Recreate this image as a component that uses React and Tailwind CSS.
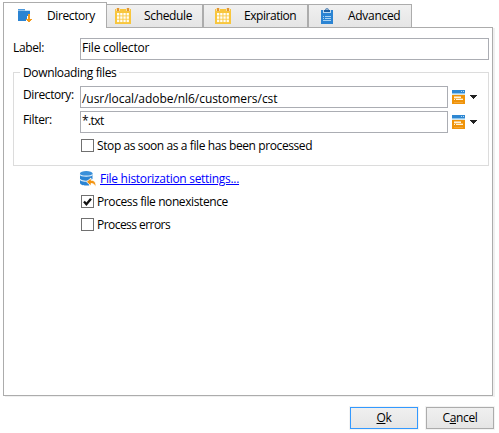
import React from 'react';

function FolderIcon() {
  return (
    <svg width="16" height="16" viewBox="0 0 16 16" shapeRendering="crispEdges">
      <path d="M1 1h7v1H1z" fill="#4c9ade" />
      <path d="M1 2h12v1H1z" fill="#c4def4" />
      <path d="M1 2h7v1H1z" fill="#8fc0ea" />
      <path d="M1 3h12v5h-3v3H9v2H1z" fill="#2b84d3" />
      <path d="M11 6h2v5h2v1h-1v1h-1v1h-2v-1h-1v-1H9v-1h2z" fill="#f39a1d" />
    </svg>
  );
}

function CalendarIcon() {
  const cells = [];
  for (const y of [5, 8.3, 11.6]) {
    for (const x of [2, 5.2, 8.4, 11.6]) {
      cells.push(<rect key={x + '-' + y} x={x} y={y} width="2.300" height="2.500" fill="#fffdf6" />);
    }
  }
  return (
    <svg width="16" height="16" viewBox="0 0 16 16">
      <path d="M0 1h16v15H0z" fill="#f8c63d" />
      <path d="M1 0h4v3H1zM11 0h4v3h-4z" fill="#f6dcae" />
      <path d="M2 0h2v3H2zM12 0h2v3h-2z" fill="#e3952f" />
      {cells}
    </svg>
  );
}

function ClipboardIcon() {
  return (
    <svg width="12" height="16" viewBox="0 0 12 16">
      <path d="M0 2h12v14H0z" fill="#2b84d3" />
      <path d="M2 2h8v3H2z" fill="#b9d9f2" />
      <path d="M3 4V2h1.200a1.800 1.800 0 0 1 3.600 0H9v2z" fill="#1c5fa3" />
      <path d="M5.500 1h1v1h-1z" fill="#fff" />
      <path d="M2 8h1v1H2zM4 8h6v1H4zM2 10h1v1H2zM4 10h6v1H4zM2 12h8v1H2z" fill="#a9d3f3" />
    </svg>
  );
}

function BrowseIcon() {
  return (
    <svg width="13" height="14" viewBox="0 0 13 14" shapeRendering="crispEdges">
      <path d="M0 0h13v3H0z" fill="#2e87d2" />
      <path d="M9 1h1v1H9zM11 1h1v1h-1z" fill="#b5daf5" />
      <path d="M0 3h13v1H0z" fill="#8fc6ee" />
      <path d="M0 4h13v1H0z" fill="#d9e6e6" />
      <path d="M0 5h13v9H0z" fill="#ef9309" />
      <path d="M2 6h7v1H2z" fill="#f8c97f" />
      <path d="M2 7h7v1H2zM4 9h7v1H4z" fill="#fff3dc" />
      <path d="M2 8h9v1H2z" fill="#f6b858" />
      <path d="M2 9h1v1H2z" fill="#fff3dc" />
      <path d="M2 12h9v1H2z" fill="#f3a638" />
    </svg>
  );
}

function BrowseButton() {
  return (
    <div className="ml-1 mt-1 flex h-[14px]">
      <BrowseIcon />
      <svg className="ml-[5px] mt-[5px]" width="7" height="4" viewBox="0 0 7 4" shapeRendering="crispEdges">
        <path d="M0 0h7v1H6v1H5v1H4v1H3V3H2V2H1V1H0z" fill="#222" />
      </svg>
    </div>
  );
}

function DatabaseIcon() {
  return (
    <svg className="overflow-visible" width="16" height="16" viewBox="0 0 16 16">
      <path d="M0 2.200v9.800c0 1.600 2.800 2.500 6.200 2.500h3V10l3.300-2V2.200z" fill="#2b84d3" />
      <ellipse cx="6.250" cy="2.200" rx="6.250" ry="2.200" fill="#3a90da" />
      <path d="M0 3.500c1 2.200 11.500 2.200 12.500 0M0 8.300c1 2.200 7 2.300 9.500 1.300" fill="none" stroke="#e3f1fb" strokeWidth="1.100" />
      <path d="M6.500 10.800L11 7v2.200c3.600 0 5.300 2.600 4.900 7-.9-2.500-2.400-3.700-4.900-3.700V15z" fill="#f39411" stroke="#fff" strokeWidth=".8" />
    </svg>
  );
}

function Tab({ icon, className, labelClass, children }) {
  return (
    <div className={'flex h-[24px] border border-[#acacac] bg-linear-to-b from-[#f0f0f0] to-[#e5e5e5] ' + className}>
      {icon}
      <span className={'leading-[16px] ' + labelClass}>{children}</span>
    </div>
  );
}

function TextBox({ className, children }) {
  return <div className={'h-[22px] border border-[#abadb3] bg-white pl-px leading-[18px] ' + className}>{children}</div>;
}

function Checkbox({ checked, className, children }) {
  return (
    <div className="flex h-[13px] items-center">
      <span className="h-[13px] w-[13px] shrink-0 border border-[#707070] bg-white">
        {checked && (
          <svg width="11" height="11" viewBox="0 0 11 11">
            <path d="M2 5.500L4.400 8.200L9 2.700" fill="none" stroke="#111" strokeWidth="2.300" />
          </svg>
        )}
      </span>
      <span className={'ml-[3px] leading-[16px] ' + className}>{children}</span>
    </div>
  );
}

export default function App() {
  return (
    <div className="h-[433px] w-[499px] overflow-hidden whitespace-nowrap bg-white pl-[3px] pt-[2px] font-['Open_Sans','Noto_Sans',sans-serif] text-[12px] text-black">
      <div className="relative -mb-px flex h-[26px] items-end">
        <div className="flex h-[26px] w-[104px] border border-b-0 border-[#acacac] bg-white pl-[13px] pt-[5px]">
          <FolderIcon />
          <span className="ml-[14px] leading-[16px] tracking-[-0.4px]">Directory</span>
        </div>
        <Tab icon={<CalendarIcon />} className="-ml-px w-[97px] pl-[8px] pt-[3px]" labelClass="ml-[13px] tracking-[-0.35px]">Schedule</Tab>
        <Tab icon={<CalendarIcon />} className="w-[105px] pl-[11px] pt-[3px]" labelClass="ml-[13px] tracking-[-0.45px]">Expiration</Tab>
        <Tab icon={<ClipboardIcon />} className="w-[104px] pl-[12px] pt-[3px]" labelClass="ml-[15px] tracking-[-0.3px]">Advanced</Tab>
      </div>

      <div className="h-[369px] w-[490px] border border-[#acacac] bg-white pl-[9px] pt-[10px] shadow-[2px_1px_0_#f0f0f0]">
        <div className="flex">
          <span className="w-[67px] leading-[19px] tracking-[-0.35px]">Label:</span>
          <TextBox className="w-[409px] tracking-[-0.2px]">File collector</TextBox>
        </div>

        <fieldset className="mt-[12px] h-[94px] w-[476px] border border-[#dcdcdc]">
          <div className="-mt-[9px] ml-[6px] w-fit bg-white px-[3px] leading-[17px] tracking-[-0.35px]">Downloading files</div>
          <div className="ml-[9px] mt-[5px] flex">
            <span className="w-[57px] leading-[18px] tracking-[-0.4px]">Directory:</span>
            <TextBox className="w-[368px] pt-[3px] tracking-[-0.05px]">/usr/local/adobe/nl6/customers/cst</TextBox>
            <BrowseButton />
          </div>
          <div className="ml-[9px] mt-[3px] flex">
            <span className="w-[57px] leading-[18px] tracking-[-0.35px]">Filter:</span>
            <TextBox className="w-[368px] tracking-[-0.6px]">*.txt</TextBox>
            <BrowseButton />
          </div>
          <div className="ml-[67px] mt-[6px]">
            <Checkbox className="tracking-[-0.4px]">Stop as soon as a file has been processed</Checkbox>
          </div>
        </fieldset>

        <div className="ml-[67px] mt-[5px] flex h-[16px]">
          <DatabaseIcon />
          <a className="ml-[4px] leading-[16px] tracking-[-0.3px] text-[#0000ff] underline">File historization settings...</a>
        </div>
        <div className="ml-[68px] mt-[8px] flex flex-col gap-[10px]">
          <Checkbox checked className="tracking-[-0.4px]">Process file nonexistence</Checkbox>
          <Checkbox className="tracking-[-0.55px]">Process errors</Checkbox>
        </div>
      </div>

      <div className="mt-[11px] flex gap-[8px] pl-[347px]">
        <button className="h-[22px] w-[68px] border border-[#3399ff] bg-linear-to-b from-[#f0f0f0] to-[#e5e5e5] leading-[20px] tracking-[-0.35px] shadow-[0_0_0_1px_#f3f3f3]">
          <u>O</u>k
        </button>
        <button className="h-[22px] w-[68px] border border-[#acacac] bg-linear-to-b from-[#f0f0f0] to-[#e5e5e5] leading-[20px] tracking-[-0.35px] shadow-[0_0_0_1px_#f3f3f3]">
          C<u>a</u>ncel
        </button>
      </div>
    </div>
  );
}
